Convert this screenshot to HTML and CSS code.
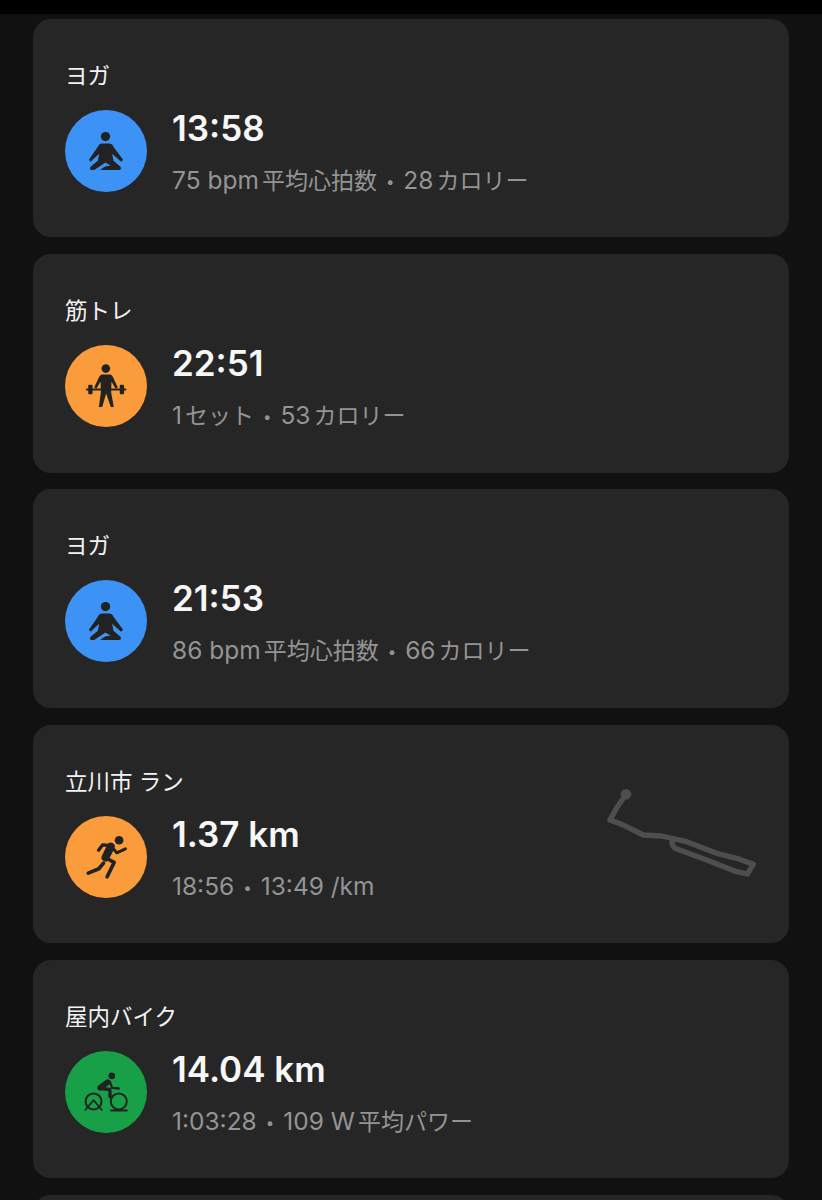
FILE: index.html
```html
<!DOCTYPE html>
<html lang="ja">

<head>
    <meta charset="UTF-8">
    <meta name="viewport" content="width=device-width, initial-scale=1.0">
    <title>アクティビティ</title>
    <link rel="stylesheet" href="styles.css">
</head>

<body>
    <svg class="defs" aria-hidden="true">
        <symbol id="icon-yoga" viewBox="30 30 247 247">
            <circle cx="152" cy="110" r="14" />
            <path d="M140 131 H165 Q173 132 177 142 L205 180 L199 186 L172 162 L176 183 L197 201 Q202 210 192 211 H136 Q150 197 168 198 L152 188 L118 211 H108 Q102 206 108 200 L129 183 L133 162 L107 186 L102 180 L128 142 Q132 132 140 131 Z" />
        </symbol>
        <symbol id="icon-strength" viewBox="30 30 247 247">
            <circle cx="153" cy="101" r="13" />
            <path d="M141 119 H166 Q171 120 174 126 L189 158 L182 161 L170 140 L169 172 L177 217 H168 L154 176 L142 217 H132 L138 172 L137 140 L125 161 L118 158 L133 126 Q136 120 141 119 Z" />
            <rect x="93" y="161" width="122" height="6" rx="3" />
            <rect x="100" y="150" width="13" height="28" rx="3" />
            <rect x="195" y="150" width="13" height="28" rx="3" />
        </symbol>
        <symbol id="icon-run" viewBox="30 30 247 247">
            <circle cx="193" cy="103" r="13" />
            <g class="limb">
                <path d="M131 133 L143 117 L172 119" stroke-width="10" />
                <path d="M172 125 L186 141 L212 129" stroke-width="9" />
                <path d="M156 158 L178 170 L157 213" stroke-width="11" />
                <path d="M146 172 L132 189 L100 202" stroke-width="11" />
                <path d="M168 122 L152 155" stroke-width="24" />
            </g>
        </symbol>
        <symbol id="icon-bike" viewBox="30 30 247 247">
            <circle cx="171" cy="105" r="10" />
            <g class="limb">
                <path d="M158 124 L136 141" stroke-width="17" />
                <path d="M165 122 L172 141 L192 143" stroke-width="7" />
                <path d="M138 143 L165 146 L166 168" stroke-width="10" />
                <circle cx="116" cy="182" r="24" stroke-width="6" />
                <circle cx="192" cy="182" r="24" stroke-width="6" />
                <path d="M91 208 L116 178 L141 208" stroke-width="5" />
                <path d="M169 209 H216" stroke-width="6" />
            </g>
        </symbol>
    </svg>

    <div class="topbar"></div>

    <div class="list">
        <div class="card">
            <p class="title">ヨガ</p>
            <div class="row">
                <svg class="badge blue"><use href="#icon-yoga" /></svg>
                <div class="stats">
                    <p class="value">13:58</p>
                    <p class="sub">75 bpm<span class="ja">平均心拍数</span><span class="dot">•</span>28<span class="ja">カロリー</span></p>
                </div>
            </div>
        </div>

        <div class="card">
            <p class="title">筋トレ</p>
            <div class="row">
                <svg class="badge orange"><use href="#icon-strength" /></svg>
                <div class="stats">
                    <p class="value">22:51</p>
                    <p class="sub">1<span class="ja">セット</span><span class="dot">•</span>53<span class="ja">カロリー</span></p>
                </div>
            </div>
        </div>

        <div class="card">
            <p class="title">ヨガ</p>
            <div class="row">
                <svg class="badge blue"><use href="#icon-yoga" /></svg>
                <div class="stats">
                    <p class="value">21:53</p>
                    <p class="sub">86 bpm<span class="ja">平均心拍数</span><span class="dot">•</span>66<span class="ja">カロリー</span></p>
                </div>
            </div>
        </div>

        <div class="card">
            <p class="title">立川市 ラン</p>
            <div class="row">
                <svg class="badge orange"><use href="#icon-run" /></svg>
                <div class="stats">
                    <p class="value">1.37 km</p>
                    <p class="sub">18:56<span class="dot">•</span>13:49 /km</p>
                </div>
            </div>
            <svg class="route" viewBox="0 0 540 330">
                <circle cx="108" cy="58" r="16" />
                <path d="M108 58 L82 95 L60 135 L95 148 L130 165 L160 180 L215 183 L290 200 L380 235 L440 250 L490 268 L472 297 L440 290 L350 255 L255 220 Q240 205 250 195" />
            </svg>
        </div>

        <div class="card">
            <p class="title">屋内バイク</p>
            <div class="row">
                <svg class="badge green"><use href="#icon-bike" /></svg>
                <div class="stats">
                    <p class="value">14.04 km</p>
                    <p class="sub">1:03:28<span class="dot">•</span>109 W<span class="ja">平均パワー</span></p>
                </div>
            </div>
        </div>

        <div class="card"></div>
    </div>
</body>

</html>
```

FILE: styles.css
```css
html,
body {
    height: 100%;
}

body {
    margin: 0;
    overflow: hidden;
    background-color: #111111;
    font-family: "Inter", "Noto Sans CJK JP", sans-serif;
}

p {
    margin: 0;
}

.defs {
    display: none;
}

.topbar {
    height: 14px;
    background-color: #000000;
}

.list {
    display: flex;
    flex-direction: column;
    gap: 16.8px;
    padding: 5px 33px 0;
}

.card {
    position: relative;
    flex: none;
    box-sizing: border-box;
    height: 218.4px;
    padding: 42px 32px 0;
    border-radius: 18px;
    background-color: #262626;
}

.title {
    height: 30px;
    font-size: 22.5px;
    line-height: 30px;
    color: #f2f2f2;
}

.row {
    display: flex;
    gap: 25px;
    margin-top: 19px;
}

.badge {
    flex: none;
    width: 82px;
    height: 82px;
    border-radius: 50%;
    fill: #222222;
    stroke: none;
}

.limb {
    fill: none;
    stroke: #222222;
    stroke-width: 8;
    stroke-linecap: round;
    stroke-linejoin: round;
}

.blue {
    background-color: #3c93f5;
}

.orange {
    background-color: #fb9c3c;
}

.green {
    background-color: #17a047;
}

.stats {
    display: flex;
    flex-direction: column;
}

.value {
    height: 37px;
    font-size: 35px;
    font-weight: 600;
    line-height: 37px;
    color: #f7f7f7;
}

.sub {
    margin-top: 18px;
    font-size: 24.5px;
    line-height: 30px;
    white-space: nowrap;
    color: #949494;
}

.ja {
    margin-left: 3px;
    font-size: 23px;
}

.dot {
    margin: 0 9px;
    font-size: 15px;
    vertical-align: 2px;
}

.route {
    position: absolute;
    left: 557px;
    top: 50px;
    width: 180px;
    height: 110px;
    fill: none;
    stroke: #4e4e4e;
    stroke-width: 16;
    stroke-linejoin: round;
    stroke-linecap: round;
}

.route circle {
    fill: #4e4e4e;
    stroke: none;
}
```
